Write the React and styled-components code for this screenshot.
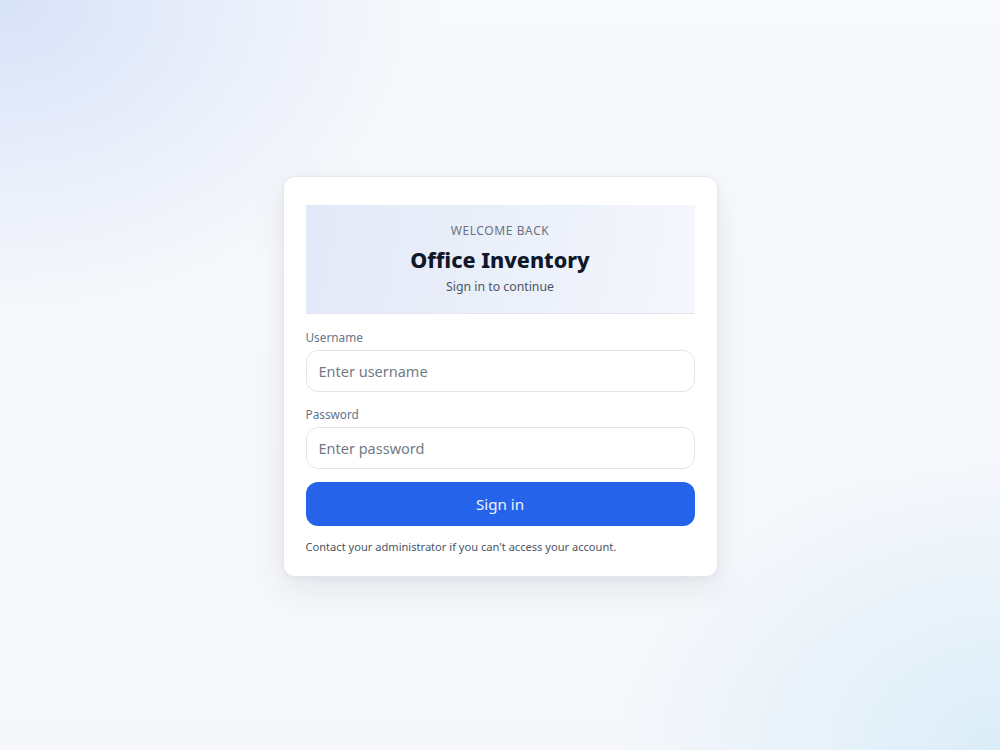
import React from 'react'
import styled, { createGlobalStyle } from 'styled-components'

const GlobalStyle = createGlobalStyle`
  html, body {
    margin: 0;
    padding: 0;
  }
  body {
    font-family: "Noto Sans", "Open Sans", sans-serif;
    background: #f7f8fb;
  }
  * {
    box-sizing: border-box;
  }
`

const Page = styled.div`
  width: 100%;
  min-height: 750px;
  padding-top: 3px;
  display: flex;
  align-items: center;
  justify-content: center;
  background:
    radial-gradient(ellipse 440px 320px at 0% 0%, rgba(214, 225, 248, 0.95), rgba(214, 225, 248, 0) 100%),
    radial-gradient(ellipse 380px 300px at 100% 100%, rgba(216, 236, 248, 0.9), rgba(216, 236, 248, 0) 100%),
    linear-gradient(180deg, #f8f9fc 0%, #f5f7fb 100%);
`

const Card = styled.div`
  width: 435px;
  background: #ffffff;
  border: 1px solid #e5e8ee;
  border-radius: 12px;
  box-shadow: 0 12px 32px rgba(15, 23, 42, 0.08), 0 2px 6px rgba(15, 23, 42, 0.04);
  padding: 28px 22px 21px 22px;
  display: flex;
  flex-direction: column;
`

const Header = styled.div`
  background: linear-gradient(100deg, #e3e9f8 0%, #eaeff9 50%, #f5f7fc 100%);
  border-bottom: 1px solid #e3e6ec;
  padding: 18px 16px 17px;
  display: flex;
  flex-direction: column;
  align-items: center;
  text-align: center;
`

const Eyebrow = styled.div`
  font-size: 12px;
  letter-spacing: 0.6px;
  color: #6b7280;
  line-height: 16px;
`

const Title = styled.h1`
  margin: 7px 0 0;
  font-size: 21.5px;
  font-weight: 800;
  color: #0f172a;
  line-height: 28px;
`

const Subtitle = styled.div`
  margin-top: 4px;
  font-size: 12.3px;
  color: #4b5563;
  line-height: 18px;
`

const Form = styled.form`
  display: flex;
  flex-direction: column;
  margin-top: 14px;
`

const Label = styled.label`
  font-size: 11.8px;
  color: #64748b;
  line-height: 18px;
  margin-bottom: 4px;
  margin-top: ${p => (p.$first ? '0' : '13px')};
`

const Input = styled.input`
  height: 42px;
  width: 100%;
  border: 1px solid #e2e6ec;
  border-radius: 12px;
  padding: 0 12px;
  font-family: inherit;
  font-size: 14.5px;
  color: #0f172a;
  background: #ffffff;
  outline: none;

  &::placeholder {
    color: #737a86;
  }
`

const Button = styled.button`
  margin-top: 13px;
  height: 44px;
  width: 100%;
  border: none;
  border-radius: 12px;
  background: #2563eb;
  color: #eef3ff;
  font-family: inherit;
  font-size: 15.2px;
  cursor: pointer;
`

const Note = styled.p`
  margin: 13px 0 0;
  font-size: 11.1px;
  color: #4b5563;
  line-height: 16px;
`

export default function App() {
  return (
    <>
      <GlobalStyle />
      <Page>
        <Card>
          <Header>
            <Eyebrow>WELCOME BACK</Eyebrow>
            <Title>Office Inventory</Title>
            <Subtitle>Sign in to continue</Subtitle>
          </Header>
          <Form onSubmit={e => e.preventDefault()}>
            <Label $first htmlFor="username">Username</Label>
            <Input id="username" placeholder="Enter username" />
            <Label htmlFor="password">Password</Label>
            <Input id="password" type="password" placeholder="Enter password" />
            <Button type="submit">Sign in</Button>
          </Form>
          <Note>Contact your administrator if you can't access your account.</Note>
        </Card>
      </Page>
    </>
  )
}
